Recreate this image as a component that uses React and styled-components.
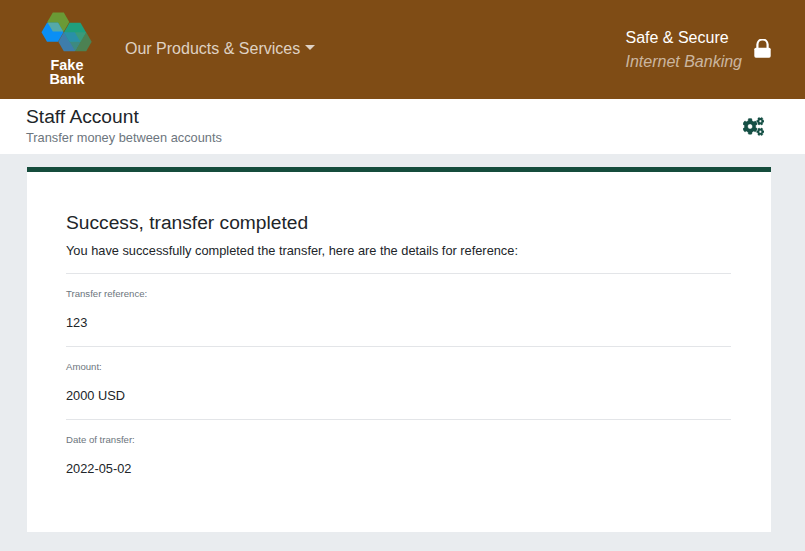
import React from "react";
import styled, { createGlobalStyle } from "styled-components";
import { FaCogs } from "react-icons/fa";

const GlobalStyle = createGlobalStyle`
  html, body {
    margin: 0;
    padding: 0;
    background: #e9ecef;
    font-family: "Liberation Sans", Arial, sans-serif;
    color: #212529;
  }
`;

const Page = styled.div`
  height: 551px;
  overflow: hidden;
`;

const Header = styled.header`
  height: 99px;
  background: #7f4c15;
  display: flex;
  align-items: center;
  padding: 0 34px 0 41px;
  box-sizing: border-box;
`;

const Brand = styled.div`
  width: 52px;
  align-self: flex-start;
  padding-top: 12px;
  display: flex;
  flex-direction: column;
  align-items: center;
`;

const BrandName = styled.div`
  color: #fff;
  font-size: 14.4px;
  font-weight: 700;
  line-height: 14.4px;
  text-align: center;
  margin-top: 5.6px;
`;

const Products = styled.div`
  margin-left: 32px;
  margin-top: -2px;
  color: rgba(255, 255, 255, 0.75);
  font-size: 16px;
  display: flex;
  align-items: center;
`;

const Caret = styled.span`
  display: inline-block;
  margin-left: 5px;
  margin-top: -3px;
  border-top: 5px solid rgba(255, 255, 255, 0.75);
  border-left: 5px solid transparent;
  border-right: 5px solid transparent;
`;

const Secure = styled.div`
  margin-left: auto;
  display: flex;
  align-items: center;
  gap: 12px;
`;

const SecureText = styled.div`
  font-size: 16px;
  line-height: 24px;
  color: #fff;
`;

const SecureSub = styled.div`
  font-style: italic;
  color: rgba(255, 255, 255, 0.6);
`;

const LockSvg = styled.svg`
  display: block;
  margin-top: -2px;
`;

const SubBar = styled.div`
  height: 55px;
  background: #fff;
  display: flex;
  align-items: center;
  justify-content: space-between;
  padding: 0 41px 0 26px;
`;

const TitleBlock = styled.div`
  margin-top: -2px;
`;

const Title = styled.h1`
  margin: 0;
  font-size: 19.2px;
  font-weight: 400;
  line-height: 23px;
`;

const Subtitle = styled.div`
  font-size: 12.8px;
  line-height: 19px;
  color: #6c757d;
`;

const CogsIcon = styled(FaCogs)`
  color: #154f45;
  font-size: 21px;
  display: block;
  stroke-width: 10px;
  transform: scaleY(1.08);
`;

const Card = styled.main`
  margin: 13px 34px 0 27px;
  height: 365px;
  padding: 39px 40px 40px 39px;
  box-sizing: border-box;
  background: #fff;
  border-top: 5px solid #154c3c;
`;

const Heading = styled.h2`
  margin: 0;
  font-size: 19.2px;
  font-weight: 400;
  line-height: 23px;
`;

const Intro = styled.p`
  margin: 7px 0 13px;
  font-size: 12.8px;
  line-height: 19.2px;
`;

const Field = styled.div`
  border-top: 1px solid #e3e5e8;
  height: 73px;
  padding-top: 13px;
  box-sizing: border-box;
`;

const Label = styled.div`
  font-size: 9.6px;
  line-height: 14px;
  color: #6c757d;
`;

const Value = styled.div`
  margin-top: 12px;
  font-size: 12.8px;
  line-height: 19.2px;
`;

const LogoSvg = styled.svg`
  display: block;
`;

// flat-top hexagon points
const hex = (cx, cy) => {
  const r = 11;
  const h = 9.5;
  return `${cx - r},${cy} ${cx - r / 2},${cy - h} ${cx + r / 2},${cy - h} ${cx + r},${cy} ${cx + r / 2},${cy + h} ${cx - r / 2},${cy + h}`;
};

const HEX = {
  green: hex(17.3, 10),
  blue: hex(11.5, 20.3),
  teal: hex(34, 20.3),
  moss: hex(39.7, 29.7),
  slate: hex(28.3, 29.7),
};

// the part of hexagon b that lies on hexagon a
const Overlap = ({ a, b, fill }) => (
  <g clipPath={`url(#logo-${a})`}>
    <polygon points={HEX[b]} fill={fill} />
  </g>
);

const Logo = () => (
  <LogoSvg width="52" height="40" viewBox="0 0 52 40">
    <defs>
      {Object.keys(HEX).map((k) => (
        <clipPath id={`logo-${k}`} key={k}>
          <polygon points={HEX[k]} />
        </clipPath>
      ))}
    </defs>
    <polygon points={HEX.green} fill="#6a9a35" />
    <polygon points={HEX.blue} fill="#0a8ff5" />
    <polygon points={HEX.moss} fill="#4c8152" />
    <polygon points={HEX.slate} fill="#3e7dab" />
    <polygon points={HEX.teal} fill="#1f9f7d" />
    <Overlap a="green" b="blue" fill="#55a9a8" />
    <Overlap a="green" b="teal" fill="#5cb02c" />
    <Overlap a="blue" b="teal" fill="#1a97c5" />
    <Overlap a="blue" b="slate" fill="#2a8fd0" />
    <Overlap a="moss" b="slate" fill="#3d8a80" />
    <Overlap a="teal" b="moss" fill="#3a9a7a" />
    <Overlap a="teal" b="slate" fill="#2a90a8" />
  </LogoSvg>
);

const Lock = () => (
  <LockSvg width="17" height="19" viewBox="0 0 17 19">
    <rect x="0.3" y="8.7" width="16.4" height="10" rx="1.6" fill="#fff" />
    <path d="M3.4 9.5V5.6a5.1 5.1 0 0 1 10.2 0v3.9" fill="none" stroke="#fff" strokeWidth="2.2" />
  </LockSvg>
);

const fields = [
  { label: "Transfer reference:", value: "123" },
  { label: "Amount:", value: "2000 USD" },
  { label: "Date of transfer:", value: "2022-05-02" },
];

export default function App() {
  return (
    <Page>
      <GlobalStyle />
      <Header>
        <Brand>
          <Logo />
          <BrandName>
            Fake
            <br />
            Bank
          </BrandName>
        </Brand>
        <Products>
          Our Products &amp; Services
          <Caret />
        </Products>
        <Secure>
          <SecureText>
            Safe &amp; Secure
            <SecureSub>Internet Banking</SecureSub>
          </SecureText>
          <Lock />
        </Secure>
      </Header>
      <SubBar>
        <TitleBlock>
          <Title>Staff Account</Title>
          <Subtitle>Transfer money between accounts</Subtitle>
        </TitleBlock>
        <CogsIcon />
      </SubBar>
      <Card>
        <Heading>Success, transfer completed</Heading>
        <Intro>
          You have successfully completed the transfer, here are the details for reference:
        </Intro>
        {fields.map((f) => (
          <Field key={f.label}>
            <Label>{f.label}</Label>
            <Value>{f.value}</Value>
          </Field>
        ))}
      </Card>
    </Page>
  );
}
